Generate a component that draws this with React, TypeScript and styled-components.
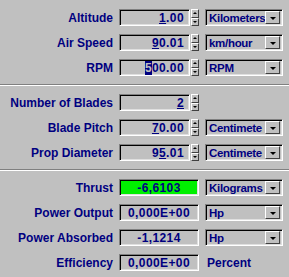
import * as React from "react";
import styled, { createGlobalStyle, css } from "styled-components";

const GlobalStyle = createGlobalStyle`
  html, body {
    margin: 0;
    padding: 0;
    background: #c0c0c0;
  }
  body {
    font-family: "Liberation Sans", Arial, sans-serif;
  }
`;

const NAVY = "#000080";

const sunken = css`
  box-sizing: border-box;
  border: 1px solid;
  border-color: #808080 #ffffff #ffffff #808080;
  box-shadow: inset 1px 1px 0 #000000, inset -1px -1px 0 #dfdfdf;
`;

const raised = css`
  box-sizing: border-box;
  background: #c0c0c0;
  border: 1px solid;
  border-color: #ffffff #404040 #404040 #ffffff;
`;

const Form = styled.div`
  width: 289px;
  height: 277px;
  box-sizing: border-box;
  padding-top: 9px;
  background: #c0c0c0;
  overflow: hidden;
`;

const Section = styled.div`
  display: flex;
  flex-direction: column;
  gap: 8px;
`;

const Separator = styled.hr`
  margin: 8px 0;
  height: 0;
  border: 0;
  border-top: 1px solid #808080;
  border-bottom: 1px solid #ffffff;
`;

const Row = styled.div`
  display: grid;
  grid-template-columns: 113px 80px 78px;
  column-gap: 6px;
  align-items: center;
  height: 17px;
`;

const Label = styled.span`
  text-align: right;
  font-size: 12px;
  font-weight: bold;
  color: ${NAVY};
  white-space: nowrap;
`;

const SpinField = styled.div`
  display: flex;
  height: 17px;
`;

const TextBox = styled.div`
  ${sunken};
  flex: 1;
  display: flex;
  align-items: center;
  justify-content: flex-end;
  padding: 0 5px 0 2px;
  background: #c0c0c0;
  font-size: 12px;
  font-weight: bold;
  letter-spacing: 0.4px;
  color: ${NAVY};
  white-space: nowrap;
`;

const Caret = styled.span`
  text-decoration: underline;
`;

const Selected = styled.span`
  background: ${NAVY};
  color: #c0c0c0;
`;

const Spinner = styled.div`
  display: flex;
  flex-direction: column;
  width: 8px;
  margin-left: 1px;
`;

const SpinButton = styled.div<{ dir: "up" | "down" }>`
  ${raised};
  flex: 1;
  display: flex;
  align-items: center;
  justify-content: center;
  &::after {
    content: "";
    width: 0;
    height: 0;
    border-left: 2px solid transparent;
    border-right: 2px solid transparent;
    ${({ dir }) =>
      dir === "up" ? "border-bottom: 2px solid #000;" : "border-top: 2px solid #000;"}
  }
`;

const Output = styled.div<{ fill?: string }>`
  ${sunken};
  height: 17px;
  display: flex;
  align-items: center;
  justify-content: center;
  background: ${({ fill }) => fill || "#c0c0c0"};
  font-size: 12px;
  font-weight: bold;
  letter-spacing: 0.4px;
  color: ${NAVY};
  white-space: nowrap;
`;

const Combo = styled.div`
  ${sunken};
  height: 17px;
  display: flex;
  align-items: center;
  padding: 2px;
  background: #c0c0c0;
`;

const ComboText = styled.span`
  flex: 1;
  overflow: hidden;
  white-space: nowrap;
  padding-left: 1px;
  font-size: 11.5px;
  font-weight: bold;
  letter-spacing: -0.3px;
  color: ${NAVY};
`;

const ComboButton = styled.div`
  ${raised};
  width: 15px;
  height: 13px;
  flex-shrink: 0;
  display: flex;
  align-items: center;
  justify-content: center;
  &::after {
    content: "";
    width: 0;
    height: 0;
    margin-top: 1px;
    border-left: 3px solid transparent;
    border-right: 3px solid transparent;
    border-top: 3px solid #000;
  }
`;

const Unit = styled.span`
  padding-left: 2px;
  font-size: 12px;
  font-weight: bold;
  color: ${NAVY};
`;

type InputRow = {
  label: string;
  before: string;
  mark: string;
  after: string;
  selected?: boolean;
  unit?: string;
};

type OutputRow = {
  label: string;
  value: string;
  fill?: string;
  unit: string;
  plain?: boolean;
};

const flight: InputRow[] = [
  { label: "Altitude", before: "", mark: "1", after: ".00", unit: "Kilometers" },
  { label: "Air Speed", before: "", mark: "9", after: "0.01", unit: "km/hour" },
  { label: "RPM", before: "", mark: "5", after: "00.00", selected: true, unit: "RPM" },
];

const prop: InputRow[] = [
  { label: "Number of Blades", before: "", mark: "2", after: "" },
  { label: "Blade Pitch", before: "", mark: "7", after: "0.00", unit: "Centimete" },
  { label: "Prop Diameter", before: "9", mark: "5", after: ".01", unit: "Centimete" },
];

const results: OutputRow[] = [
  { label: "Thrust", value: "-6,6103", fill: "#00f000", unit: "Kilograms" },
  { label: "Power Output", value: "0,000E+00", unit: "Hp" },
  { label: "Power Absorbed", value: "-1,1214", unit: "Hp" },
  { label: "Efficiency", value: "0,000E+00", unit: "Percent", plain: true },
];

const Dropdown: React.FC<{ text: string }> = ({ text }) => (
  <Combo>
    <ComboText>{text}</ComboText>
    <ComboButton />
  </Combo>
);

const InputLine: React.FC<{ row: InputRow }> = ({ row }) => (
  <Row>
    <Label>{row.label}</Label>
    <SpinField>
      <TextBox>
        {row.before}
        {row.selected ? <Selected>{row.mark}</Selected> : <Caret>{row.mark}</Caret>}
        {row.after}
      </TextBox>
      <Spinner>
        <SpinButton dir="up" />
        <SpinButton dir="down" />
      </Spinner>
    </SpinField>
    {row.unit && <Dropdown text={row.unit} />}
  </Row>
);

export default function App() {
  return (
    <Form>
      <GlobalStyle />
      <Section>
        {flight.map((r) => (
          <InputLine key={r.label} row={r} />
        ))}
      </Section>
      <Separator />
      <Section>
        {prop.map((r) => (
          <InputLine key={r.label} row={r} />
        ))}
      </Section>
      <Separator />
      <Section>
        {results.map((r) => (
          <Row key={r.label}>
            <Label>{r.label}</Label>
            <Output fill={r.fill}>{r.value}</Output>
            {r.plain ? <Unit>{r.unit}</Unit> : <Dropdown text={r.unit} />}
          </Row>
        ))}
      </Section>
    </Form>
  );
}
